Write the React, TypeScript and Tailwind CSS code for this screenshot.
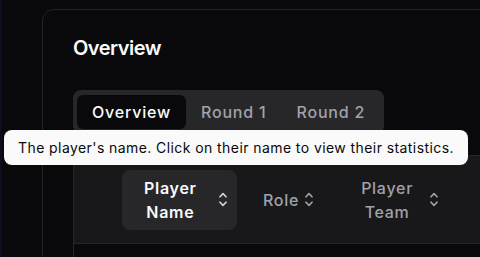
import React from 'react';

function SortIcon() {
  return (
    <svg width="8" height="15" viewBox="0 0 8 15" fill="none" className="shrink-0">
      <path d="M1 4.8 4 1.6 7 4.8" stroke="currentColor" strokeWidth="1.6" strokeLinecap="round" strokeLinejoin="round" />
      <path d="M1 10.2 4 13.4 7 10.2" stroke="currentColor" strokeWidth="1.6" strokeLinecap="round" strokeLinejoin="round" />
    </svg>
  );
}

const tabs = ['Overview', 'Round 1', 'Round 2'];

export default function App() {
  return (
    <div
      className="relative h-[257px] w-[480px] overflow-hidden border-l-2 border-[#0b0e22] bg-[#09090b]"
      style={{ fontFamily: 'Inter, "Noto Sans", sans-serif' }}
    >
      <div className="ml-[40px] mt-[9px] h-[300px] w-[520px] rounded-xl border border-[#232326] bg-[#09090b] pl-[30px] pt-6">
        <h2 className="text-xl leading-7 font-semibold tracking-tight text-[#fafafa]">Overview</h2>

        <div className="mt-7 inline-flex rounded-lg bg-[#27272a] px-1 py-[5px]">
          {tabs.map((t, i) => (
            <div
              key={t}
              className={`flex h-[34px] items-center rounded-md px-[15px] text-base font-medium tracking-[0.05em] ${
                i === 0 ? 'bg-[#09090b] text-[#fafafa]' : 'text-[#a1a1aa]'
              }`}
            >
              {t}
            </div>
          ))}
        </div>

        <div className="mt-[21px] w-[600px] overflow-hidden rounded-lg border border-[#27272a]">
          <div className="flex h-[88px] items-center border-b border-[#27272a] bg-[#18181b] text-base leading-6 font-medium tracking-[0.045em]">
            <div className="w-[48px] shrink-0" />
            <div className="flex h-[60px] w-[115px] shrink-0 items-center rounded-lg bg-[#27272a] pl-[22px] text-[#fafafa]">
              <div className="text-center font-semibold">
                Player
                <br />
                Name
              </div>
              <span className="ml-[22px] text-[#d4d4d8]">
                <SortIcon />
              </span>
            </div>
            <div className="ml-[26px] flex items-center text-[#a1a1aa]">
              <span>Role</span>
              <span className="ml-[6px]">
                <SortIcon />
              </span>
            </div>
            <div className="ml-[48px] flex items-center text-[#a1a1aa]">
              <div className="text-center">
                Player
                <br />
                Team
              </div>
              <span className="ml-[17px]">
                <SortIcon />
              </span>
            </div>
          </div>
          <div className="h-[40px] bg-[#09090b]" />
        </div>
      </div>

      <div className="absolute left-[2px] top-[130px] flex h-[35px] items-center whitespace-nowrap rounded-lg bg-[#fafafa] px-[14px] text-sm tracking-[0.03em] text-[#09090b]">
        The player's name. Click on their name to view their statistics.
      </div>
    </div>
  );
}
